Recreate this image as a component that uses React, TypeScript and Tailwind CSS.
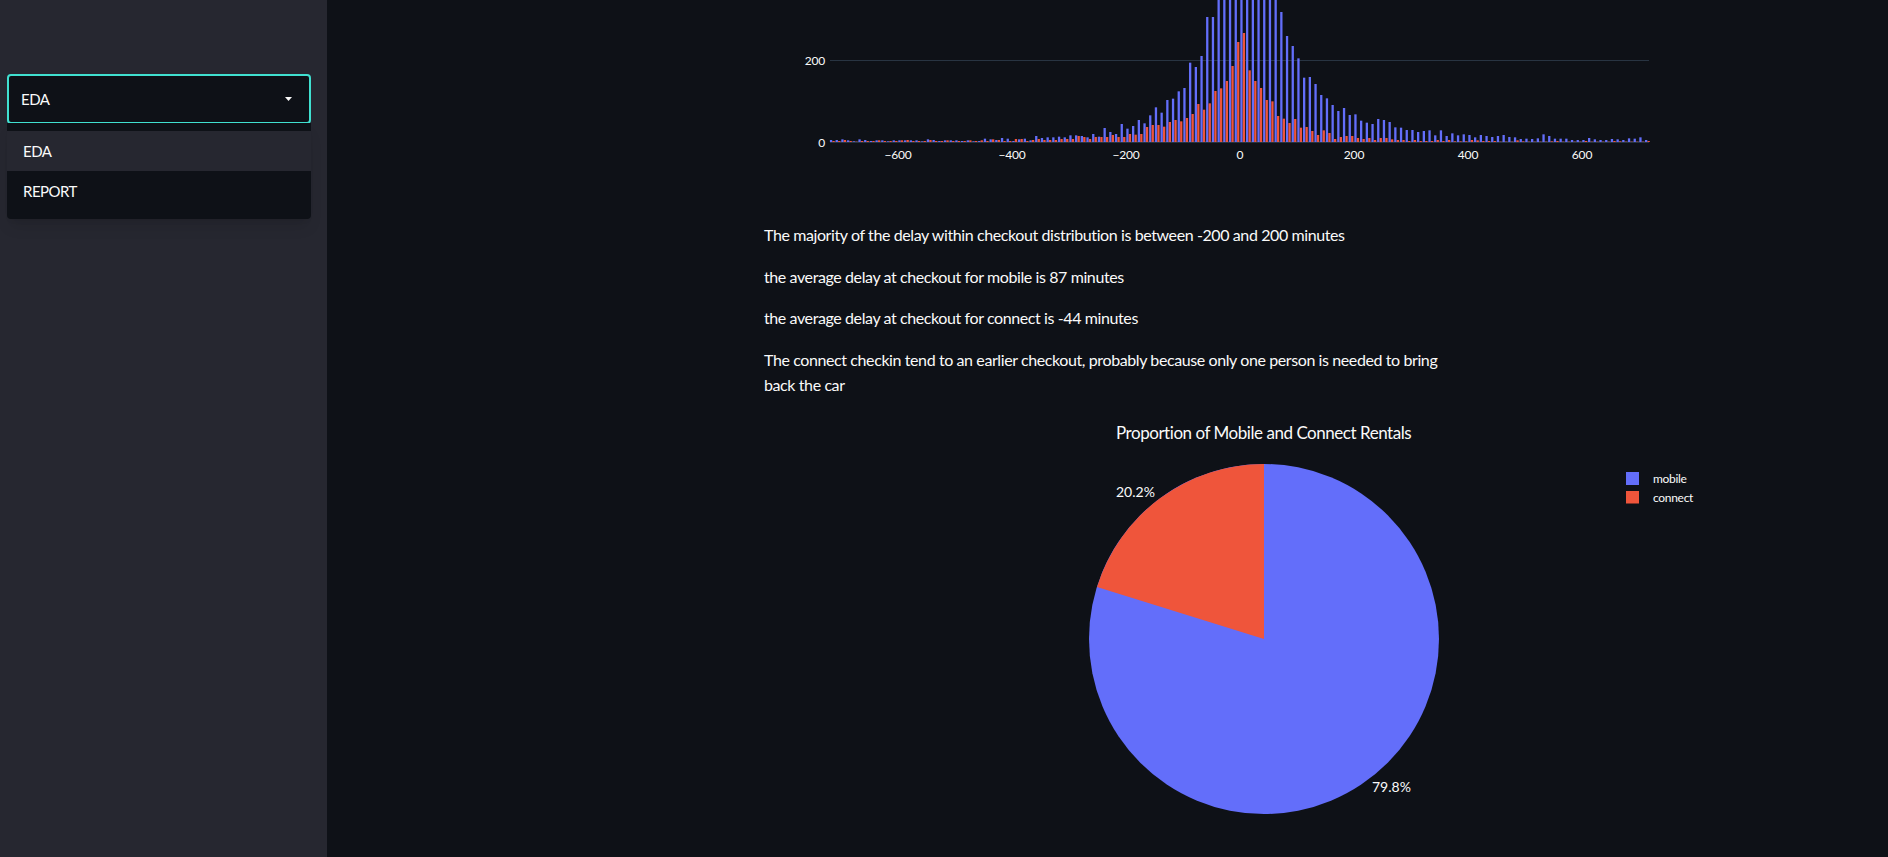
const BLUE = [
  6, 6, 8, 5, 2, 8, 6, 3, 5, 5, 2, 5, 5, 5, 5, 5, 2, 8, 6, 3, 5, 5, 5, 3, 5, 2, 3, 10, 8, 6, 12, 10, 3, 8, 10, 5,
  18, 12, 14, 14, 16, 14, 20, 20, 18, 14, 24, 16, 42, 30, 24, 54, 40, 48, 66, 56, 80, 104, 88, 126, 130, 152, 162, 238, 225, 258,
  375, 375, 560, 620, 700, 760, 800, 760, 700, 640, 600, 560, 500, 390, 318, 288, 251, 193, 195, 174, 141, 131, 111, 93, 102, 81, 83, 64, 58, 54,
  69, 66, 60, 44, 43, 36, 36, 30, 33, 35, 20, 35, 18, 26, 20, 23, 21, 14, 21, 18, 15, 18, 21, 15, 14, 9, 10, 9, 11, 23, 18, 10,
  10, 10, 6, 6, 6, 12, 8, 6, 6, 9, 8, 6, 11, 10, 14, 6,
];

const RED = [
  3, 3, 6, 3, 1, 3, 3, 3, 5, 3, 3, 3, 5, 6, 3, 3, 3, 6, 3, 3, 5, 3, 3, 3, 5, 3, 5, 3, 8, 6, 3, 3, 9, 9, 3, 6,
  9, 6, 6, 6, 9, 9, 9, 18, 15, 9, 15, 15, 15, 21, 15, 15, 24, 22, 24, 45, 51, 51, 46, 60, 66, 62, 72, 84, 114, 97,
  116, 153, 161, 183, 228, 300, 327, 215, 183, 162, 126, 122, 78, 70, 57, 69, 43, 45, 33, 21, 35, 27, 9, 15, 18, 18, 12, 9, 12, 6,
  12, 12, 8, 6, 6, 3, 6, 3, 3, 3, 6, 3, 6, 2, 2, 2, 6, 5, 3, 3, 3, 1, 1, 1, 5, 2, 1, 1, 1, 1, 2, 3,
  1, 1, 1, 1, 3, 1, 1, 1, 1, 3, 2, 1, 1, 1, 1, 3,
];

const BASE_Y = 142;
const X_TICKS = [-600, -400, -200, 0, 200, 400, 600];
const SANS = "[font-family:Lato,sans-serif]";

function Histogram() {
  return (
    <svg viewBox="764 0 1000 222" className={`block h-[222px] w-[1000px] ${SANS}`}>
      <line x1="830" x2="1649" y1="60.5" y2="60.5" stroke="#283442" />
      <line x1="830" x2="1649" y1={BASE_Y} y2={BASE_Y} stroke="#283442" strokeWidth="2" />
      {BLUE.map((h, i) => (
        <rect key={i} x={829.9 + 5.7 * i} y={BASE_Y - h / 3} width="2.3" height={h / 3} fill="#636efa" />
      ))}
      {RED.map((h, i) => (
        <rect key={i} x={832.4 + 5.7 * i} y={BASE_Y - h / 3} width="2.3" height={h / 3} fill="#ef553b" />
      ))}
      <g fill="#fafafa" fontSize="12" className="tracking-[-0.2px]">
        <text x="825" y="64.5" textAnchor="end">200</text>
        <text x="825" y="146.5" textAnchor="end">0</text>
        {X_TICKS.map((t) => (
          <text key={t} x={1240 + t * 0.57} y="159" textAnchor="middle">
            {t < 0 ? `−${-t}` : t}
          </text>
        ))}
      </g>
    </svg>
  );
}

function PieChart() {
  return (
    <svg viewBox="764 414 1000 443" className={`block h-[443px] w-[1000px] ${SANS}`}>
      <text x="1116" y="439" fill="#fafafa" fontSize="17" className="tracking-[-0.46px]">Proportion of Mobile and Connect Rentals</text>
      <circle cx="1264" cy="639" r="175" fill="#636efa" />
      <path d="M1264 639 L1264 464 A175 175 0 0 0 1097 587 Z" fill="#ef553b" />
      <g fill="#fafafa" fontSize="14">
        <text x="1116" y="497">20.2%</text>
        <text x="1372" y="792">79.8%</text>
      </g>
      <rect x="1626" y="472" width="13" height="13" fill="#636efa" />
      <rect x="1626" y="491" width="13" height="12.5" fill="#ef553b" />
      <g fill="#fafafa" fontSize="12" className="tracking-[-0.3px]">
        <text x="1653" y="483">mobile</text>
        <text x="1653" y="502">connect</text>
      </g>
    </svg>
  );
}

function Sidebar() {
  return (
    <aside className={`relative h-full w-[327px] shrink-0 bg-[#262730] pl-[7px] pr-[16px] pt-[74px] text-[15px] tracking-[-0.5px] text-[#fafafa] ${SANS}`}>
      <div className="flex h-[50px] items-center justify-between rounded border-2 border-[#40e0d0] bg-[#0e1117] pl-[12px] pr-[17px]">
        <span>EDA</span>
        <svg viewBox="0 0 7 4" className="h-[4px] w-[7px]" fill="#fafafa">
          <path d="M0 0h7L3.5 4z" />
        </svg>
      </div>
      <ul className="absolute left-[7px] top-[123px] w-[304px] rounded-b bg-[#0e1117] pb-[8px] pt-[8px] shadow-lg">
        <li className="flex h-[40px] items-center bg-[#262730] pl-[16px]">EDA</li>
        <li className="flex h-[40px] items-center pl-[16px]">REPORT</li>
      </ul>
    </aside>
  );
}

export default function App() {
  return (
    <div className="flex h-[857px] w-full overflow-hidden bg-[#0e1117]">
      <Sidebar />
      <main className="h-full flex-1 overflow-hidden pl-[437px]">
        <Histogram />
        <div className={`w-[704px] text-[16px] leading-[25.6px] tracking-[-0.4px] text-[#fafafa] ${SANS}`}>
          <p className="mb-4">The majority of the delay within checkout distribution is between -200 and 200 minutes</p>
          <p className="mb-4">the average delay at checkout for mobile is 87 minutes</p>
          <p className="mb-4">the average delay at checkout for connect is -44 minutes</p>
          <p className="mb-4">The connect checkin tend to an earlier checkout, probably because only one person is needed to bring<br />back the car</p>
        </div>
        <PieChart />
      </main>
    </div>
  );
}
